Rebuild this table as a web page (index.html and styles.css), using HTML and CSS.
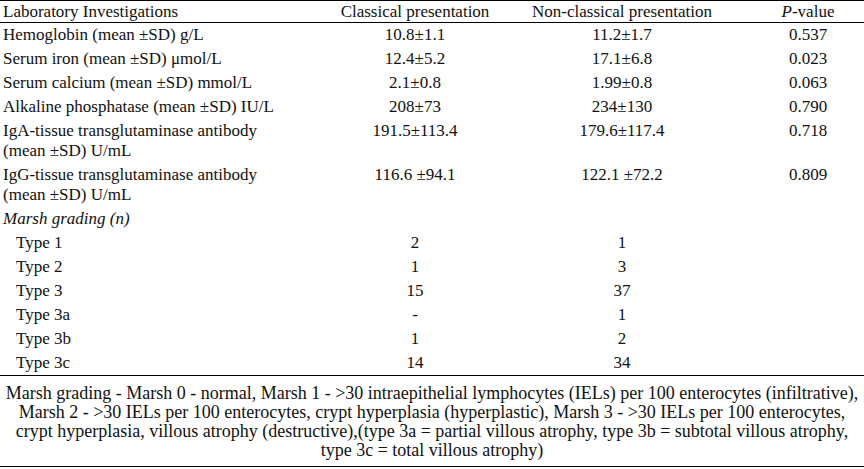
FILE: index.html
```html
<!DOCTYPE html>
<html lang="en">
<head>
<meta charset="utf-8">
<title>Laboratory Investigations</title>
<link rel="stylesheet" href="styles.css">
</head>
<body>
<table class="data">
  <colgroup>
    <col class="c1"><col class="c2"><col class="c3"><col class="c4">
  </colgroup>
  <thead>
    <tr>
      <th class="lbl">Laboratory Investigations</th>
      <th>Classical presentation</th>
      <th>Non-classical presentation</th>
      <th><i>P</i>-value</th>
    </tr>
  </thead>
  <tbody>
    <tr><td class="lbl">Hemoglobin (mean ±SD) g/L</td><td>10.8±1.1</td><td>11.2±1.7</td><td>0.537</td></tr>
    <tr><td class="lbl">Serum iron (mean ±SD) μmol/L</td><td>12.4±5.2</td><td>17.1±6.8</td><td>0.023</td></tr>
    <tr><td class="lbl">Serum calcium (mean ±SD) mmol/L</td><td>2.1±0.8</td><td>1.99±0.8</td><td>0.063</td></tr>
    <tr><td class="lbl">Alkaline phosphatase (mean ±SD) IU/L</td><td>208±73</td><td>234±130</td><td>0.790</td></tr>
    <tr><td class="lbl">IgA-tissue transglutaminase antibody<br>(mean ±SD) U/mL</td><td>191.5±113.4</td><td>179.6±117.4</td><td>0.718</td></tr>
    <tr><td class="lbl">IgG-tissue transglutaminase antibody<br>(mean ±SD) U/mL</td><td>116.6 ±94.1</td><td>122.1 ±72.2</td><td>0.809</td></tr>
    <tr><td class="lbl sect" colspan="4">Marsh grading (n)</td></tr>
    <tr><td class="lbl sub">Type 1</td><td>2</td><td>1</td><td></td></tr>
    <tr><td class="lbl sub">Type 2</td><td>1</td><td>3</td><td></td></tr>
    <tr><td class="lbl sub">Type 3</td><td>15</td><td>37</td><td></td></tr>
    <tr><td class="lbl sub">Type 3a</td><td>-</td><td>1</td><td></td></tr>
    <tr><td class="lbl sub">Type 3b</td><td>1</td><td>2</td><td></td></tr>
    <tr><td class="lbl sub">Type 3c</td><td>14</td><td>34</td><td></td></tr>
  </tbody>
  <tfoot>
    <tr>
      <td class="note" colspan="4">Marsh grading - Marsh 0 - normal, Marsh 1 - &gt;30 intraepithelial lymphocytes (IELs) per 100 enterocytes (infiltrative),<br>Marsh 2 - &gt;30 IELs per 100 enterocytes, crypt hyperplasia (hyperplastic), Marsh 3 - &gt;30 IELs per 100 enterocytes,<br>crypt hyperplasia, villous atrophy (destructive),(type 3a = partial villous atrophy, type 3b = subtotal villous atrophy,<br>type 3c = total villous atrophy)</td>
    </tr>
  </tfoot>
</table>
</body>
</html>
```

FILE: styles.css
```css
html, body {
  margin: 0;
  padding: 0;
  background: #fff;
}

body {
  font-family: "Liberation Serif", "Times New Roman", serif;
  font-size: 17px;
  color: #111;
}

.data {
  width: 864px;
  border-collapse: collapse;
  table-layout: fixed;
  border-top: 1px solid #000;
  border-bottom: 1px solid #000;
}

.c1 { width: 338px; }
.c2 { width: 154px; }
.c3 { width: 260px; }
.c4 { width: 112px; }

.data th,
.data td {
  padding: 2px 0;
  line-height: 20px;
  text-align: center;
  vertical-align: top;
  font-weight: normal;
  white-space: nowrap;
}

.data thead th {
  padding: 1px 0 1px;
  line-height: 19px;
  border-bottom: 1px solid #000;
}

.data .lbl {
  text-align: left;
  padding-left: 3px;
}

.data .sub {
  padding-left: 16px;
}

.data .sect {
  font-style: italic;
}

.data tfoot td {
  border-top: 1px solid #000;
}

.data .note {
  padding: 8px 0 6px;
  font-size: 18px;
  line-height: 19px;
  text-align: center;
}
```
